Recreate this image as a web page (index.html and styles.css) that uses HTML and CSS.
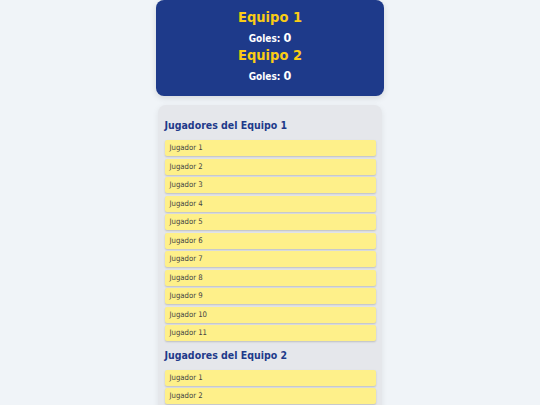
FILE: index.html
```html
<!doctype html>
<html>
<head>
<title>Marcador</title>
<link rel="stylesheet" href="styles.css">
</head>
<body>
<main>
	<div class="marcador">
		<div class="equipo">
			<h2>Equipo 1</h2>
			<p class="goles">Goles: <span id="goles1">0</span></p>
		</div>
		<div class="equipo">
			<h2>Equipo 2</h2>
			<p class="goles">Goles: <span id="goles2">0</span></p>
		</div>
	</div>
	<div class="jugadores">
		<h3>Jugadores del Equipo 1</h3>
		<ul id="lista1" class="lista"></ul>
		<h3>Jugadores del Equipo 2</h3>
		<ul id="lista2" class="lista"></ul>
	</div>
</main>
<script type="text/javascript">
function llenar(id) {
	var lista = document.getElementById(id);
	for (var i = 1; i <= 11; i++) {
		var li = document.createElement("li");
		li.className = "jugador";
		li.innerHTML = "Jugador " + i;
		lista.appendChild(li);
	}
}
llenar("lista1");
llenar("lista2");
</script>
</body>
</html>
```

FILE: styles.css
```css
* {
	box-sizing: border-box;
	margin: 0;
	padding: 0;
}

body {
	background: #f0f4f8;
	font-family: "DejaVu Sans Condensed", "DejaVu Sans", Tahoma, sans-serif;
}

main {
	margin: 0 auto;
	width: 228px;
}

.marcador {
	background: #1e3a8a;
	border-radius: 8px;
	box-shadow: 0 2px 6px rgba(0,0,0,.12);
	padding: 8px 8px 10.8px 8px;
	text-align: center;
}

.equipo + .equipo {
	margin-top: -1.5px;
}

.equipo h2 {
	color: #facc15;
	font-size: 14.5px;
	line-height: 18px;
}

.goles {
	color: #fff;
	font-size: 10px;
	font-weight: bold;
	line-height: 16px;
	margin-top: 5.2px;
}

.goles span {
	font-size: 12.5px;
	line-height: 1;
}

.jugadores {
	background: #e5e7eb;
	border-radius: 8px;
	box-shadow: 0 2px 6px rgba(0,0,0,.08);
	margin: 9px 2px 0 2px;
	padding: 13.8px 6.5px 7px 6.5px;
}

.jugadores h3 {
	color: #1e3a8a;
	font-size: 10.5px;
	line-height: 14px;
	margin-bottom: 8px;
}

.lista {
	list-style: none;
	margin-bottom: 6.5px;
}

.jugador {
	background: #fef08a;
	border-radius: 2px;
	box-shadow: 0 1px 2px rgba(0,0,0,.18);
	color: #444;
	font-size: 7.7px;
	height: 16px;
	line-height: 16px;
	margin-bottom: 2.5px;
	padding: 0 5px;
}
```
